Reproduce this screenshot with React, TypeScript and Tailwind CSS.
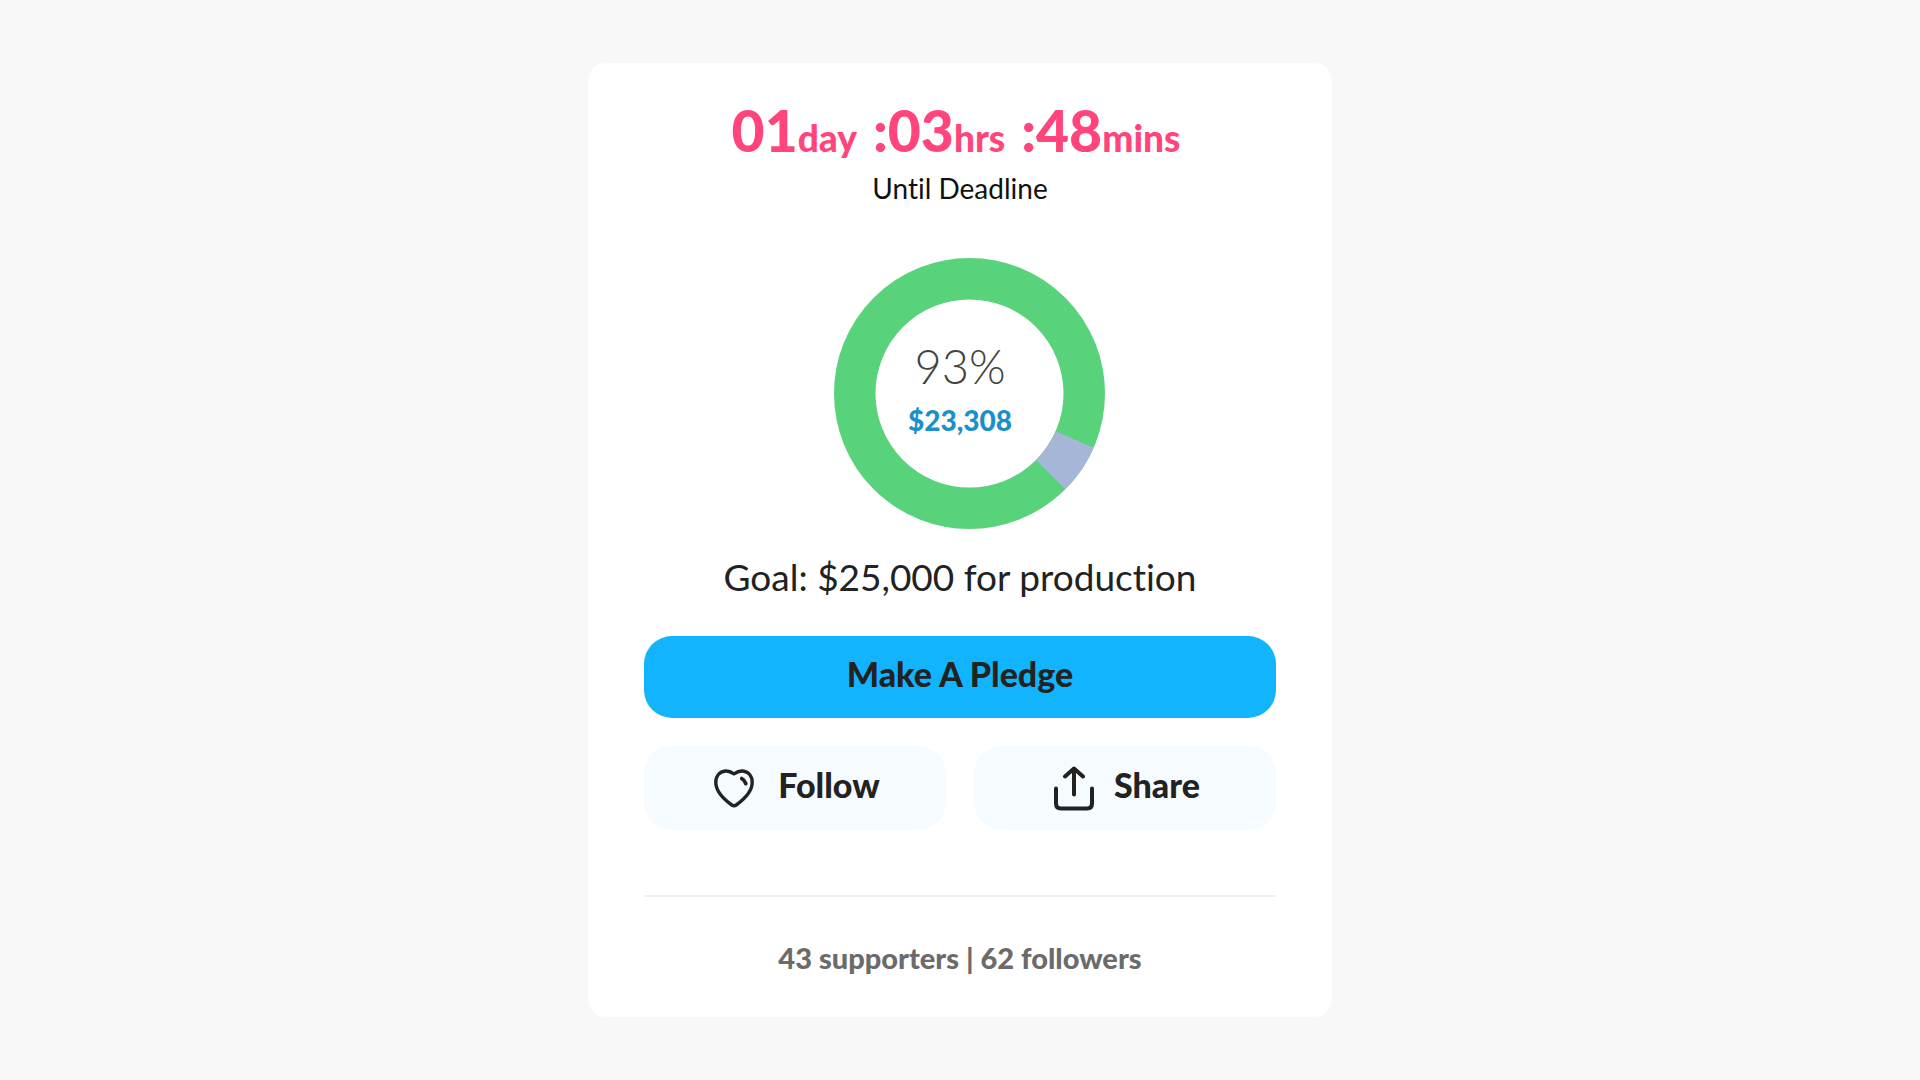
const deadline = [
    { value: "01", unit: "day" },
    { value: ":03", unit: "hrs" },
    { value: ":48", unit: "mins" },
]

function HeartIcon() {
    return (
        <svg className="w-10 h-[39px] shrink-0" viewBox="0 0 40 39" fill="none" stroke="#222" strokeWidth="3.4" strokeLinecap="round" strokeLinejoin="round" aria-hidden="true">
            <path d="M20 4.8C16.5 2.4 14 1.8 11.5 2C5.5 2.6 1.8 7 1.8 13.5C1.8 22.5 8.8 29.5 17.8 36C19.4 37.1 20.6 37.1 22.2 36C31.2 29.5 38.2 22.5 38.2 13.5C38.2 7 34.5 2.6 28.5 2C26 1.8 23.5 2.4 20 4.8Z" />
            <path d="M27.8 9.6C29.8 10.6 31 12 31.8 14.6" strokeWidth="3.8" />
        </svg>
    )
}

function ShareIcon() {
    return (
        <svg className="w-10 h-[45px] shrink-0" viewBox="0 0 40 45" fill="none" stroke="#222" strokeWidth="4" strokeLinecap="round" strokeLinejoin="round" aria-hidden="true">
            <path d="M2 22.5V37.5Q2 42.5 7 42.5H33Q38 42.5 38 37.5V22.5" />
            <path d="M20 28.5V2.5M11 10.5L20 2.5L29 10.5" />
        </svg>
    )
}

function PledgeChart() {
    return (
        <div className="relative mt-[52px]">
            <svg className="w-[290px] h-[271px]" viewBox="0 0 290 271" fill="none" strokeWidth="41.5" aria-hidden="true">
                <circle cx="154.5" cy="135.5" r="114.75" stroke="#58d37c" />
                <path d="M259.65 181.44A114.75 114.75 0 0 1 235.64 216.64" stroke="#a6b6d7" />
            </svg>
            <div className="absolute inset-0 flex flex-col items-center pt-20">
                <span className="text-[47px] leading-[56px] font-light text-[#444]">93%</span>
                <span className="text-[28px] leading-[36px] mt-2 font-black text-[#1990cc]">$23,308</span>
            </div>
        </div>
    )
}

export default function App() {
    return (
        <main className="flex items-center justify-center min-h-screen w-full bg-[#f8f8f8] font-['Lato',sans-serif] text-[#222] [font-variant-ligatures:none]">
            <section className="flex flex-col items-center w-full max-w-[744px] bg-white rounded-[18px] px-14 pt-[41px] pb-[41px]">
                <h1 className="flex items-baseline gap-4 pr-2 text-[57px] leading-[52px] font-black text-[#ff457c]">
                    {deadline.map((part) => (
                        <span key={part.unit}>
                            {part.value}
                            <span className="text-[37px] leading-none">{part.unit}</span>
                        </span>
                    ))}
                </h1>
                <p className="mt-[14px] text-[28px] leading-[36px] text-[#111]">Until Deadline</p>

                <PledgeChart />

                <p className="mt-[26px] text-[37px] leading-[44px]">Goal: $25,000 for production</p>

                <button className="w-full h-[82px] mt-[37px] pb-2 rounded-[28px] bg-[#12b5fd] text-[34px] font-black">
                    Make A Pledge
                </button>

                <div className="grid grid-cols-2 gap-7 w-full mt-7">
                    <button className="flex items-center justify-center gap-6 h-[84px] pl-1 rounded-[28px] bg-[#f5fbff] text-[34px] font-black">
                        <HeartIcon />
                        <span className="pb-2">Follow</span>
                    </button>
                    <button className="flex items-center justify-center gap-5 h-[84px] pl-1 rounded-[28px] bg-[#f5fbff] text-[34px] font-black">
                        <ShareIcon />
                        <span className="pb-2">Share</span>
                    </button>
                </div>

                <hr className="w-full mt-[65px] border-t-2 border-[#efefef]" />
                <p className="mt-[43px] text-[29px] leading-[36px] font-black text-[#6b6b6b]">
                    43 supporters | 62 followers
                </p>
            </section>
        </main>
    )
}
